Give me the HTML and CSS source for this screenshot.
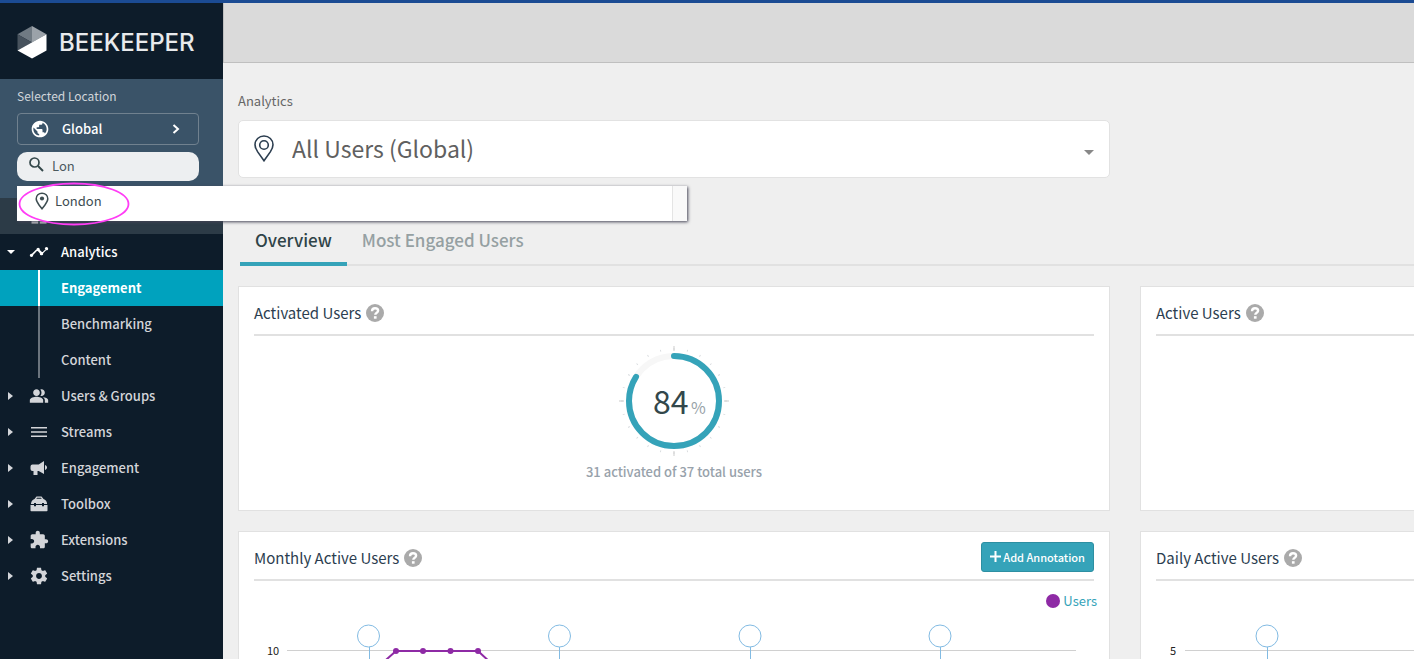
FILE: index.html
```
<!DOCTYPE html>
<html lang="en">
<head>
	<meta charset="utf-8">
	<title>Analytics - Beekeeper</title>
	<link rel="stylesheet" href="styles.css">
</head>
<body>
	<!-- shared icon shapes -->
	<svg class="sprite" aria-hidden="true">
		<symbol id="help" viewBox="0 0 18 18">
			<circle cx="9" cy="9" r="9" fill="#aaa"/>
			<path d="M6 7.2C6.1 5.1 7.3 4.2 9 4.2c1.800 0 3.100 1 3.100 2.500 0 2.100-2.800 1.900-2.800 4" fill="none" stroke="#fff" stroke-width="2.400"/>
			<rect x="7.900" y="12.200" width="2.700" height="2.500" fill="#fff"/>
		</symbol>
		<symbol id="pin" viewBox="0 0 14 18">
			<path d="M7 1.200C3.700 1.200 1.200 3.700 1.200 6.800c0 2.300 1.500 4.400 3 6.400L7 16.800l2.800-3.600c1.500-2 3-4.100 3-6.400 0-3.100-2.500-5.600-5.800-5.600z" fill="none" stroke="currentColor" stroke-width="1.500"/>
			<circle cx="7" cy="6.500" r="2.100" fill="currentColor"/>
		</symbol>
	</svg>

	<div class="app">
		<div class="sidebar">
			<a class="logo" href="#">
				<svg width="30" height="33" viewBox="0 0 30 33">
					<path d="M15 0L29.500 8.200 15 16.500z" fill="#9ba2a9"/>
					<path d="M15 0L.5 8.200 15 16.500z" fill="#707a83"/>
					<path d="M.5 8.200L15 16.500.5 24.500z" fill="#47525d"/>
					<path d="M29.500 8.200v16.300L15 32.500.5 24.500z" fill="#fff"/>
				</svg>
				<span>BEEKEEPER</span>
			</a>

			<div class="location">
				<div class="location-title">Selected Location</div>
				<button class="location-button" type="button">
					<svg width="20" height="20" viewBox="0 0 24 24"><path fill="#fff" d="M12 2C6.480 2 2 6.480 2 12s4.480 10 10 10 10-4.480 10-10S17.520 2 12 2zm-1 17.930c-3.950-.49-7-3.850-7-7.930 0-.62.080-1.210.210-1.790L9 15v1c0 1.100.9 2 2 2v1.930zm6.900-2.540c-.26-.81-1-1.390-1.900-1.390h-1v-3c0-.55-.45-1-1-1H8v-2h2c.55 0 1-.45 1-1V7h2c1.100 0 2-.9 2-2v-.41c2.930 1.190 5 4.060 5 7.410 0 2.080-.8 3.970-2.100 5.390z"/></svg>
					<span>Global</span>
					<svg class="chevron" width="8" height="10" viewBox="0 0 8 10"><path d="M1.500 1L6 5 1.500 9" fill="none" stroke="#fff" stroke-width="2"/></svg>
				</button>
				<label class="search">
					<svg width="15" height="17" viewBox="0 0 15 17" fill="none" stroke="#33474a"><circle cx="5.500" cy="5.500" r="4.500" stroke-width="1.700"/><path d="M9 9l5 5" stroke-width="2"/></svg>
					<input type="text" value="Lon" aria-label="Search location">
				</label>
				<div class="suggestions">
					<a href="#"><svg width="14" height="18"><use href="#pin"/></svg>London</a>
					<div class="scroll-track"></div>
				</div>
				<svg class="marker" width="112" height="44" viewBox="0 0 112 44"><ellipse cx="56" cy="22" rx="54.500" ry="20.500" fill="none" stroke="#ff3df5" stroke-width="1.800"/></svg>
			</div>

			<ul class="nav">
				<li class="dashboard"><a href="#" aria-label="Dashboard"><svg class="icon" width="20" height="20" viewBox="0 0 24 24"><path d="M3 13h8V3H3v10zm0 8h8v-6H3v6zm10 0h8V11h-8v10zm0-18v6h8V3h-8z"/></svg></a></li>
				<li class="open">
					<a href="#"><i class="arrow"></i><svg class="icon" width="20" height="20" viewBox="0 0 24 24"><path d="M23 8c0 1.100-.9 2-2 2-.18 0-.35-.02-.51-.07l-3.560 3.550c.05.16.07.34.07.52 0 1.100-.9 2-2 2s-2-.9-2-2c0-.18.020-.36.070-.52l-2.550-2.550c-.16.050-.34.070-.52.070s-.36-.02-.52-.07l-4.550 4.560c.05.160.07.330.07.510 0 1.100-.9 2-2 2s-2-.9-2-2 .9-2 2-2c.180 0 .350.020.510.070l4.560-4.550C9.020 9.360 9 9.180 9 9c0-1.100.9-2 2-2s2 .9 2 2c0 .18-.02.36-.07.52l2.550 2.550c.16-.05.34-.07.52-.07s.36.020.52.070l3.550-3.560C19.020 8.350 19 8.180 19 8c0-1.100.9-2 2-2s2 .9 2 2z"/></svg>Analytics</a>
					<ul class="subnav">
						<li><a class="active" href="#">Engagement</a></li>
						<li><a href="#">Benchmarking</a></li>
						<li><a href="#">Content</a></li>
					</ul>
				</li>
				<li><a href="#"><i class="arrow"></i><svg class="icon" width="20" height="20" viewBox="0 0 24 24"><path d="M16.670 13.130C18.040 14.060 19 15.320 19 17v3h4v-3c0-2.180-3.570-3.470-6.330-3.870zM15 12c2.210 0 4-1.790 4-4s-1.790-4-4-4c-.47 0-.91.100-1.330.240C14.500 5.270 15 6.580 15 8s-.5 2.730-1.330 3.760c.42.140.86.240 1.330.240zM9 12c2.210 0 4-1.790 4-4s-1.790-4-4-4-4 1.790-4 4 1.790 4 4 4zm0 1c-2.670 0-8 1.340-8 4v3h16v-3c0-2.660-5.330-4-8-4z"/></svg>Users &amp; Groups</a></li>
				<li><a href="#"><i class="arrow"></i><svg class="icon" width="20" height="20" viewBox="0 0 20 20"><path d="M2 5h16v1.500H2zM2 9.300h16v1.500H2zM2 13.600h16v1.500H2z"/></svg>Streams</a></li>
				<li><a href="#"><i class="arrow"></i><svg class="icon" width="20" height="20" viewBox="0 0 20 20"><path d="M3.500 6.500h6.200L15 3v13l-5.300-3H8.500v4H4.500v-4h-1a2 2 0 0 1-2-2V8.500a2 2 0 0 1 2-2zM16 7c1.600.7 2 1.600 2 2.500s-.4 1.900-2 2.600z"/></svg>Engagement</a></li>
				<li><a href="#"><i class="arrow"></i><svg class="icon" width="20" height="20" viewBox="0 0 20 20"><path d="M7.500 2.500h5L14.500 5c2 .6 3.600 2.300 3.600 5h-3.100V9h-2v1H7V9H5v1H2c0-2.700 1.500-4.400 3.500-5zM8 3.700L7.300 4.800h5.400L12 3.700zM1.500 11H5v1.200h2V11h6v1.200h2V11h3.500v5.500a.8.800 0 0 1-.8.800H2.300a.8.800 0 0 1-.8-.8z"/></svg>Toolbox</a></li>
				<li><a href="#"><i class="arrow"></i><svg class="icon" width="20" height="20" viewBox="0 0 24 24"><path d="M20.500 11H19V7c0-1.100-.9-2-2-2h-4V3.500C13 2.120 11.880 1 10.500 1S8 2.120 8 3.500V5H4c-1.100 0-1.990.9-1.990 2v3.800H3.500c1.490 0 2.700 1.210 2.700 2.700s-1.210 2.700-2.700 2.700H2V20c0 1.100.9 2 2 2h3.800v-1.500c0-1.490 1.210-2.700 2.700-2.700 1.490 0 2.700 1.210 2.700 2.700V22H17c1.100 0 2-.9 2-2v-4h1.500c1.380 0 2.500-1.120 2.500-2.500S21.880 11 20.500 11z"/></svg>Extensions</a></li>
				<li><a href="#"><i class="arrow"></i><svg class="icon" width="20" height="20" viewBox="0 0 24 24"><path d="M19.430 12.980c.04-.32.070-.64.070-.98s-.03-.66-.07-.98l2.110-1.650c.19-.15.240-.42.120-.64l-2-3.460c-.12-.22-.39-.3-.61-.22l-2.490 1c-.52-.4-1.080-.73-1.690-.98l-.38-2.650C14.460 2.180 14.250 2 14 2h-4c-.25 0-.46.180-.49.420l-.38 2.650c-.61.250-1.170.59-1.690.98l-2.490-1c-.23-.09-.49 0-.61.220l-2 3.460c-.13.220-.07.490.12.640l2.110 1.650c-.04.320-.07.650-.07.980s.03.660.07.980l-2.110 1.650c-.19.150-.24.420-.12.640l2 3.460c.12.220.39.300.61.220l2.490-1c.52.400 1.080.730 1.690.980l.38 2.650c.03.240.24.420.49.420h4c.25 0 .46-.18.490-.42l.38-2.650c.61-.25 1.170-.59 1.690-.98l2.490 1c.23.090.49 0 .61-.22l2-3.460c.12-.22.070-.49-.12-.64l-2.110-1.650zM12 15.500c-1.930 0-3.500-1.570-3.500-3.500s1.570-3.500 3.500-3.500 3.500 1.570 3.500 3.500-1.570 3.500-3.500 3.500z"/></svg>Settings</a></li>
			</ul>
		</div>

		<div class="main">
			<div class="topbar"></div>
			<div class="content">
				<div class="breadcrumb">Analytics</div>

				<div class="group-select">
					<svg class="group-pin" width="20" height="27" viewBox="0 0 20 27" fill="none" stroke="#2c3e50" stroke-width="1.600"><path d="M10 1C5 1 1 4.800 1 9.700c0 2.700 1.200 4.900 2.700 7.200L10 25.800l6.300-8.900c1.500-2.300 2.700-4.500 2.700-7.200C19 4.800 15 1 10 1z"/><circle cx="10" cy="10" r="4.300"/></svg>
					<select aria-label="User group">
						<option>All Users (Global)</option>
					</select>
					<i class="caret"></i>
				</div>

				<div class="tabs">
					<a class="active" href="#">Overview</a>
					<a href="#">Most Engaged Users</a>
				</div>

				<div class="cards">
					<div class="card">
						<div class="card-header">
							<h2>Activated Users</h2>
							<button class="help" type="button" aria-label="Help"><svg width="18" height="18"><use href="#help"/></svg></button>
						</div>
						<div class="gauge">
							<svg width="112" height="112" viewBox="0 0 112 112">
								<g fill="none" transform="rotate(-90 56 56)">
									<circle cx="56" cy="56" r="52" pathLength="2400" stroke="#d9dcdf" stroke-width="2" stroke-dasharray="7 93" stroke-dashoffset="3.500"/>
									<circle cx="56" cy="56" r="52.500" pathLength="400" stroke="#ccc" stroke-width="5" stroke-dasharray="1.200 98.800" stroke-dashoffset=".6"/>
									<circle cx="56" cy="56" r="45" stroke="#f7f7f7" stroke-width="6"/>
									<circle cx="56" cy="56" r="45" pathLength="100" stroke="#35a3b9" stroke-width="6" stroke-linecap="round" stroke-dasharray="84 16"/>
								</g>
								<text class="gauge-value" x="35" y="69">84</text>
								<text class="gauge-unit" x="73" y="69">%</text>
							</svg>
							<div class="gauge-caption">31 activated of 37 total users</div>
						</div>
					</div>

					<div class="card">
						<div class="card-header">
							<h2>Active Users</h2>
							<button class="help" type="button" aria-label="Help"><svg width="18" height="18"><use href="#help"/></svg></button>
						</div>
					</div>

					<div class="card">
						<div class="card-header">
							<h2>Monthly Active Users</h2>
							<button class="help" type="button" aria-label="Help"><svg width="18" height="18"><use href="#help"/></svg></button>
							<button class="add" type="button"><svg width="11" height="11" viewBox="0 0 11 11"><path d="M5.500 0v11M0 5.500h11" stroke="#fff" stroke-width="2"/></svg>Add Annotation</button>
						</div>
						<div class="legend"><i class="dot"></i>Users</div>
						<svg class="chart" viewBox="0 0 840 240">
							<text x="13" y="45">10</text>
							<path class="grid" d="M33 40.500H822"/>
							<g class="annotation">
								<path d="M115.500 37v203M305.500 37v203M496.500 37v203M686.500 37v203"/>
								<circle cx="114.500" cy="26" r="11"/>
								<circle cx="305.500" cy="26" r="11"/>
								<circle cx="496" cy="26" r="11"/>
								<circle cx="686" cy="26" r="11"/>
							</g>
							<path class="series" d="M115 65L142 41h82L251 66"/>
							<g fill="#8e2aa5">
								<circle cx="142" cy="41" r="3"/>
								<circle cx="169" cy="41" r="3"/>
								<circle cx="196.500" cy="41" r="3"/>
								<circle cx="224" cy="41" r="3"/>
							</g>
						</svg>
					</div>

					<div class="card">
						<div class="card-header">
							<h2>Daily Active Users</h2>
							<button class="help" type="button" aria-label="Help"><svg width="18" height="18"><use href="#help"/></svg></button>
						</div>
						<div class="legend"></div>
						<svg class="chart" viewBox="0 0 840 240">
							<text x="14" y="45">5</text>
							<path class="grid" d="M29 40.500H822"/>
							<g class="annotation">
								<path d="M111.500 37v203"/>
								<circle cx="111" cy="26" r="11"/>
							</g>
						</svg>
					</div>
				</div>
			</div>
		</div>
	</div>
</body>
</html>
```

FILE: styles.css
```
* {
	box-sizing: border-box;
}
body {
	margin: 0;
	font-family: "Noto Sans CJK SC", "Noto Sans", sans-serif;
	font-size: 13px;
	line-height: 20px;
	color: #666;
	background: #efefef;
}
a {
	color: inherit;
	text-decoration: none;
}
ul {
	list-style: none;
	margin: 0;
	padding: 0;
}
button, input, select {
	font-family: inherit;
	margin: 0;
}
svg {
	flex: none;
}
.sprite {
	display: none;
}
.app {
	display: flex;
	height: 100vh;
	overflow: hidden;
	border-top: 3px solid #1b4b93;
}

/* sidebar */
.sidebar {
	flex: none;
	width: 223px;
	background: #0d1c2a;
	color: #d3d5d9;
	font-weight: 500;
}
.logo {
	display: flex;
	align-items: center;
	gap: 12px;
	height: 76px;
	padding: 3px 17px 0;
	font-family: Inter, sans-serif;
	font-size: 24px;
	color: #e8eaec;
}
.location {
	position: relative;
	z-index: 2;
	height: 119px;
	padding: 7px 24px 0 17px;
	background: #3a5368;
}
.location-title {
	font-size: 12px;
	font-weight: normal;
	color: #d0d5da;
}
.location-button {
	display: flex;
	align-items: center;
	width: 100%;
	height: 32px;
	margin-top: 7px;
	padding: 0 18px 1px 12px;
	border: 1px solid #70818f;
	border-radius: 4px;
	background: none;
	color: #fff;
	font-size: 13px;
	font-weight: 500;
}
.location-button span {
	margin-left: 12px;
}
.chevron {
	margin-left: auto;
}
.search {
	display: flex;
	align-items: center;
	gap: 8px;
	height: 29px;
	margin-top: 7px;
	padding: 0 12px 2px;
	border-radius: 10px;
	background: #edeff1;
}
.search input {
	width: 100%;
	padding: 0;
	border: 0;
	outline: 0;
	background: none;
	color: #4b5a5e;
	font-size: 13px;
}
.suggestions {
	position: absolute;
	top: 107px;
	left: 17px;
	display: flex;
	width: 670px;
	height: 35px;
	background: #fff;
	box-shadow: 1px 1px 3px #445;
}
.suggestions a {
	display: flex;
	flex: 1;
	align-items: center;
	gap: 6px;
	padding: 0 18px 5px;
	color: #3d4d51;
	font-weight: normal;
}
.scroll-track {
	width: 15px;
	border-left: 1px solid #e4e4e4;
	background: #f9f9f9;
}
.marker {
	position: absolute;
	top: 103px;
	left: 18px;
}
.nav a {
	display: flex;
	align-items: center;
	height: 36px;
}
.nav .dashboard a {
	padding-left: 29px;
	background: #2c3b47;
}
.icon {
	margin-right: 12px;
	fill: currentColor;
}
.arrow {
	width: 5px;
	margin: 0 16px 0 8px;
	border: solid transparent;
	border-width: 4px 0 4px 5px;
	border-left-color: currentColor;
}
.open {
	color: #fff;
}
.open .arrow {
	width: 8px;
	margin: 0 14px 0 7px;
	border-width: 4px 4px 0;
	border-color: currentColor transparent;
}
.subnav {
	color: #d3d5d9;
}
.subnav a::before {
	content: "";
	align-self: stretch;
	width: 2px;
	margin: 0 21px 0 38px;
	background: #6b747d;
}
.subnav .active {
	background: #00a2be;
	color: #fff;
	font-weight: bold;
}
.subnav .active::before {
	background: #fff;
}

/* main column */
.main {
	flex: 1;
	min-width: 0;
	overflow: hidden;
}
.topbar {
	height: 60px;
	border-bottom: 1px solid #bfbfbf;
	border-left: 1px solid #bfbfbf;
	background: #dadada;
}
.content {
	padding: 28px 0 0 15px;
}
.group-select {
	position: relative;
	width: calc(75% - 10px);
	margin-top: 9px;
}
.group-select select {
	width: 100%;
	height: 58px;
	padding: 0 50px 2px 53px;
	border: 1px solid #e2e2e2;
	border-radius: 5px;
	appearance: none;
	background: #fff;
	color: #606060;
	font-size: 23px;
}
.group-pin {
	position: absolute;
	top: 15px;
	left: 16px;
}
.caret {
	position: absolute;
	top: 30px;
	right: 16px;
	border: solid transparent;
	border-width: 5px 5px 0;
	border-top-color: #888;
}
.tabs {
	display: flex;
	height: 50px;
	margin: 38px 0 20px 2px;
	border-bottom: 2px solid #e1e1e1;
}
.tabs a {
	height: 50px;
	padding: 14px 15px 0;
	color: #95a0a2;
	font-size: 17px;
	font-weight: 500;
}
.tabs .active {
	border-bottom: 4px solid #35a3b9;
	color: #2f4448;
}

/* cards */
.cards {
	display: grid;
	grid-template-columns: repeat(2, calc(75% - 10px));
	gap: 20px 30px;
}
.card {
	min-height: 225px;
	padding: 0 15px;
	border: 1px solid #e1e1e1;
	background: #fff;
}
.card-header {
	display: flex;
	align-items: center;
	height: 49px;
	padding-top: 5px;
	border-bottom: 2px solid #e1e1e1;
}
.card-header h2 {
	margin: 0;
	color: #2c3e50;
	font-size: 15px;
	font-weight: normal;
}
.help {
	display: flex;
	margin-left: 5px;
	padding: 0;
	border: 0;
	background: none;
}
.add {
	display: flex;
	align-items: center;
	gap: 2px;
	height: 30px;
	margin: 0 0 2px auto;
	padding: 0 8px 1px;
	border: 1px solid #2d8fa2;
	border-radius: 3px;
	background: #35a3b9;
	color: #fff;
	font-size: 11px;
	font-weight: 500;
}
.gauge {
	display: flex;
	flex-direction: column;
	align-items: center;
	padding-top: 9px;
}
.gauge-value {
	fill: #33474b;
	font-size: 32px;
}
.gauge-unit {
	fill: #98a3a8;
	font-size: 16px;
}
.gauge-caption {
	margin-top: 5px;
	color: #98a2ab;
	font-weight: 500;
}
.legend {
	display: flex;
	align-items: center;
	justify-content: flex-end;
	gap: 3px;
	height: 29px;
	margin-right: -3px;
	padding-top: 11px;
	color: #35a3b9;
}
.dot {
	width: 14px;
	height: 14px;
	border-radius: 50%;
	background: #8e2aa5;
}
.chart {
	display: block;
	width: 100%;
	fill: #222;
	font-size: 11px;
}
.grid {
	stroke: #d0d0d0;
}
.annotation {
	fill: #fff;
	stroke: #82bbe3;
}
.series {
	fill: none;
	stroke: #8e2aa5;
	stroke-width: 2;
}
```
